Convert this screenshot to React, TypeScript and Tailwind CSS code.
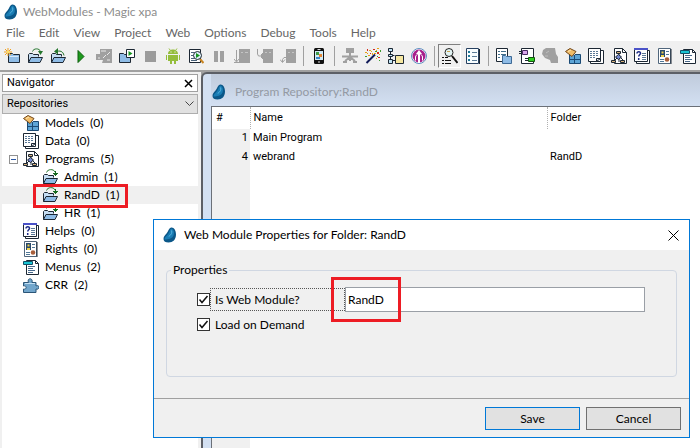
import type { ReactNode } from "react";

const INK = "#1c2733";

function Glyph({ children, size = 16 }: { children: ReactNode; size?: number }) {
  return (
    <svg width={size} height={size} viewBox="0 0 16 16" fill="none" aria-hidden="true" className="shrink-0">
      {children}
    </svg>
  );
}

function Drop() {
  return (
    <Glyph>
      <path d="M9 .5C12 0 14 3.500 14 7.500c0 5-3 8-7.500 8C3.500 15.500 1.500 14.500 1.500 12c0-2.500 1.500-3.700 3-5.500C6.500 4.200 6.500 1.500 9 .5z" fill="#0b5788" />
      <path d="M9.500 1.500C12 2.500 12.500 6 11.500 8.500 10.300 11.500 6.500 12.500 2.500 12.500 2.500 10.500 4 9.500 5.500 7.800 7.500 5.600 7.500 2.500 9.500 1.500z" fill="#1a7db4" />
      <path d="M9.500 3.500c1 2-.3 4.500-2.800 6" stroke="#56b4e0" />
    </Glyph>
  );
}

function FolderShape() {
  return (
    <>
      <path d="M1.500 14.500v-8l1-1h3l1 1h5v2" fill="#c6def4" stroke={INK} />
      <path d="M1.500 14.500l2.500-5h11.500l-2.500 5z" fill="#8fbce6" stroke={INK} />
    </>
  );
}

function NewFolder() {
  return (
    <Glyph>
      <path d="M4.500 14.500v-9h4l1 1h6v8z" fill="#8fbce6" stroke={INK} />
      <path d="M5.500 8.500h9" stroke="#d5e9fb" />
      <path d="M4 0v8M0 4h8M1 1l6 6M7 1L1 7" stroke="#f0a020" />
      <path d="M3 3h2v2H3z" fill="#ffe25c" />
    </Glyph>
  );
}

function OpenFolder() {
  return (
    <Glyph>
      <FolderShape />
      <path d="M5.500 3.500c1-3.500 7-3.500 8 0" stroke="#23752c" />
      <path d="M11 3h5l-2.500 4z" fill="#23752c" />
    </Glyph>
  );
}

function ReturnFolder() {
  return (
    <Glyph>
      <FolderShape />
      <path d="M6 3.500c4-1 7-.5 8 4" stroke="#23752c" />
      <path d="M8 0v6.500L4 3.500z" fill="#23752c" />
    </Glyph>
  );
}

function TreeFolder() {
  return (
    <Glyph>
      <FolderShape />
      <path d="M4.500 3.500c1-3.500 7-4 8.500-.5" stroke="#23752c" />
      <path d="M11 4.500h5M13.500 2v5" stroke="#176a20" />
      <path d="M12 4h3v2h-3z" fill="#176a20" />
    </Glyph>
  );
}

function Run() {
  return (
    <Glyph>
      <path d="M5 2.500v12l6-6z" fill="#1d9a1d" stroke="#0c5f0c" />
    </Glyph>
  );
}

function GreyTask() {
  return (
    <Glyph>
      <path d="M0 6h4V1h12v14H6l1-3H0z" fill="#a0a0a0" />
      <path d="M5 3h5M11 7l3-3M7 10l3-3M2 10h2M11 12h3" stroke="#e9e9e9" />
    </Glyph>
  );
}

function RunProject() {
  return (
    <Glyph>
      <path d="M.5 14.500v-9h4l1 1h6v8z" fill="#8fbce6" stroke={INK} />
      <path d="M7.500 1.500h8v8h-8z" fill="#fff" stroke={INK} />
      <path d="M9.500 3v5l4-2.500z" fill="#16941f" />
    </Glyph>
  );
}

function Stop() {
  return (
    <Glyph>
      <path d="M3 3h11v11H3z" fill="#9b9b9b" />
    </Glyph>
  );
}

function Android() {
  return (
    <Glyph>
      <path d="M3 6c0-6 10-6 10 0zM3 7h10v6H3zM1 7h1v5H1zM14 7h1v5h-1zM5 13h2v3H5zM9 13h2v3H9z" fill="#94bd3c" />
      <path d="M4 .5l1.500 2M12 .5l-1.500 2" stroke="#94bd3c" />
      <path d="M5.500 4h1M9.500 4h1" stroke="#fff" />
    </Glyph>
  );
}

function DebugRun() {
  return (
    <Glyph>
      <path d="M1.500 1.500h11v13h-11z" fill="#fff" stroke={INK} />
      <path d="M3 4.500h3M3 7.500h2M3 10.500h3M3 12.500h6" stroke="#49627a" />
      <path d="M12 11l3.500 4" stroke="#c98522" strokeWidth="2" />
      <circle cx="9.500" cy="7.500" r="4" fill="#e0f0f8" stroke={INK} />
      <path d="M8 5v5l4-2.500z" fill="#16941f" />
    </Glyph>
  );
}

function Pause() {
  return (
    <Glyph>
      <path d="M3 3h4v11H3zM9 3h4v11H9z" fill="#a0a0a0" />
    </Glyph>
  );
}

function StepInto() {
  return (
    <Glyph>
      <path d="M5 1h11v14H5z" fill="#a0a0a0" />
      <path d="M2.500 2v11M0 11l2.500 3L5 11M0 14.500h6" stroke="#a0a0a0" />
      <path d="M7 4.500h2M11 4.500h3" stroke="#c4c4c4" />
    </Glyph>
  );
}

function StepOver() {
  return (
    <Glyph>
      <path d="M6 1h10v14H6z" fill="#a0a0a0" />
      <path d="M.5 1v5l1 2h4M5 5l3 3-3 3" stroke="#a0a0a0" />
      <path d="M4 6h3v4H4z" fill="#a0a0a0" />
      <path d="M8 4.500h2M12 4.500h2" stroke="#c4c4c4" />
    </Glyph>
  );
}

function StepOut() {
  return (
    <Glyph>
      <path d="M6 1h10v14H6z" fill="#a0a0a0" />
      <path d="M8 9.500H4l-1.500 2V14M0 11.500l2.500 3 2.500-3" stroke="#a0a0a0" />
      <path d="M8 4.500h2M12 4.500h2" stroke="#c4c4c4" />
    </Glyph>
  );
}

function Phone() {
  return (
    <Glyph>
      <rect x="3" y="0" width="10" height="16" rx="1.500" fill="#111" />
      <path d="M4 3h8v9H4z" fill="#cfeaf6" />
      <path d="M5 4h3v3H5z" fill="#3f9b46" />
      <path d="M8 6h3v3H8z" fill="#e58634" />
      <path d="M5 9h4v2H5z" fill="#3a86c8" />
      <path d="M6.500 1.500h3M7 14h2" stroke="#ddd" />
    </Glyph>
  );
}

function GreyTree() {
  return (
    <Glyph>
      <path d="M4 0h8v5H4zM1 13h4v2H1zM11 13h4v2h-4z" fill="#a0a0a0" />
      <path d="M8 5v8M0 8.500h16M3 13l5-4 5 4" stroke="#a0a0a0" strokeWidth="2" />
    </Glyph>
  );
}

function Wand() {
  return (
    <Glyph>
      <path d="M1.500 15L10 6.500" stroke="#111b58" strokeWidth="2" />
      <path d="M0 4h2v1H0zM4 2h2v1H4zM7 5h1v2H7zM3 7h2v1H3zM12 0h2v1h-2z" fill="#e8a010" />
      <path d="M2 1h1v2H2zM8 1h2v1H8zM12 4h2v2h-2zM13 9h2v1h-2zM5 5h1v1H5z" fill="#d12b1f" />
      <path d="M10 3h2v1h-2zM15 2h1v2h-1zM12 8h1v1h-1zM0 8h2v1H0zM14 12h1v1h-1z" fill="#3b9b2c" />
      <path d="M6 3h1v1H6zM9 5h2v1H9zM11 2h1v1h-1zM11 10h1v1h-1zM14 6h1v1h-1zM2 5h1v1H2z" fill="#e8a010" />
    </Glyph>
  );
}

function Composite() {
  return (
    <Glyph>
      <path d="M2.500 4v8M2.500 7.500h4M2.500 12.500h5" stroke={INK} />
      <path d="M.5.5h4v3h-4zM.5 6.500h4v2h-4zM.5 11.500h4v4h-4z" fill="#bfe3f5" stroke={INK} />
      <path d="M7.500 7.500h8v8h-8z" fill="#f6e7a0" stroke={INK} />
    </Glyph>
  );
}

function Merge() {
  return (
    <Glyph>
      <circle cx="8" cy="8" r="7.500" fill="#fff" stroke="#5c8fc0" />
      <circle cx="8" cy="8" r="6.500" fill="#a8208c" />
      <path d="M8 2l3 4H9v9H7V6H5z" fill="#fff" />
      <path d="M4.500 12.500V9c0-2 2-2 2-3M11.500 12.500V9c0-2-2-2-2-3" stroke="#fff" />
    </Glyph>
  );
}

function Locate() {
  return (
    <Glyph>
      <path d="M0 9.500h2M3 9.500h3M0 12.500h2M3 12.500h6M0 15.500h2M3 15.500h6" stroke="#111" />
      <path d="M10 8l5.500 7" stroke="#111" strokeWidth="2" />
      <circle cx="7" cy="4.500" r="4" fill="#e3f4f4" stroke="#222" />
      <path d="M5 3.500h3" stroke="#c8a452" />
    </Glyph>
  );
}

function ListPage() {
  return (
    <Glyph>
      <path d="M1.500.5h12v15h-12z" fill="#f8fdff" stroke="#274060" />
      <path d="M14.500 1v15" stroke={INK} />
      <path d="M3 4h2M3 8h2M3 12h2" stroke="#1f7a9a" strokeWidth="2" />
      <path d="M7 4.500h5M7 8.500h5M7 12.500h5" stroke="#5c7d98" />
    </Glyph>
  );
}

function ListFolder() {
  return (
    <Glyph>
      <path d="M.5.500h11v13H.5z" fill="#fff" stroke={INK} />
      <path d="M2 3.500h2M5 3.500h5M2 6.500h2M5 6.500h5M2 9.500h2" stroke="#42708c" />
      <path d="M6.500 15.500v-8h3l1 1h5v7z" fill="#8fbce6" stroke="#3e6a96" />
    </Glyph>
  );
}

function Plugs() {
  return (
    <Glyph>
      <path d="M2.500.5h12v15h-12z" fill="#fff" stroke={INK} />
      <path d="M0 3.500h4M0 5.500h4M6 10.500h4M6 12.500h4" stroke={INK} />
      <path d="M3.500 2.500h5v4h-5z" fill="#d9a5ec" stroke="#4a2a63" />
      <path d="M9.500 9.500h6v4h-6z" fill="#2fd022" stroke="#14520f" />
    </Glyph>
  );
}

function GreyModels() {
  return (
    <Glyph>
      <path d="M1 2l3-2h9l1 6 2 3v6H9l-1-3-5-2-3-4z" fill="#a0a0a0" />
      <path d="M4 5l3-2M3 8h3" stroke="#bdbdbd" />
    </Glyph>
  );
}

function Models() {
  return (
    <Glyph>
      <path d="M4 6h5v9.500H4zM9.500 6.500h6v9h-6z" fill="#5ea5d6" />
      <path d="M4.500 7v8.500h11V6.500H10M9.500 7v8.500M4.500 11.500h11" stroke="#1b4a74" />
      <path d="M.5 3.500L5 .5l6 3-4 5z" fill="#f1bd68" stroke="#714618" />
      <path d="M3 3.500L6 2" stroke="#ffe6b0" />
    </Glyph>
  );
}

function DataPages() {
  return (
    <Glyph>
      <path d="M2.500 2.500h13v13h-13z" fill="#fff" stroke={INK} />
      <path d="M.5.5h12v13H.5z" fill="#fff" stroke={INK} />
      <path d="M2 3.500h9M2 5.500h9M2 7.500h9M2 9.500h6" stroke="#5a7896" strokeDasharray="2 1" />
      <path d="M8.500 13.500v-3h4z" fill="#e7eef5" stroke={INK} />
    </Glyph>
  );
}

function Programs() {
  return (
    <Glyph>
      <path d="M3.500.5h8l4 4v11h-12z" fill="#fff" stroke={INK} />
      <path d="M11.500.5v4h4" stroke={INK} />
      <path d="M8 4v10M3 13l5-5 5 5" stroke={INK} />
      <path d="M5.500 3.500h4v2h-4zM.5 12.500h4v2h-4zM9.500 12.500h4v2h-4z" fill="#d6b07a" stroke={INK} />
      <path d="M7.500 6.500l3 2.500-3 2.500-3-2.500z" fill="#7388d0" stroke={INK} />
    </Glyph>
  );
}

function Helps() {
  return (
    <Glyph>
      <path d="M2.500 2.500h13v13h-13z" fill="#fff" stroke={INK} />
      <path d="M.5.5h13v13H.5z" fill="#fff" stroke={INK} />
      <path d="M0 1h14" stroke="#4a52c8" strokeWidth="2" />
      <path d="M3 5.500c0-2.500 4-2 3.500 0-.3 1.200-1.800 1.500-1.800 3M4.700 10v2" stroke="#1d2c88" strokeWidth="1.500" />
      <path d="M8 5.500h4M8 7.500h4M8 9.500h4M8 11.500h4" stroke="#5a7896" />
    </Glyph>
  );
}

function Rights() {
  return (
    <Glyph>
      <path d="M1.500.5h12v15h-12z" fill="#fff" stroke="#50667c" />
      <path d="M14 1v15" stroke={INK} />
      <path d="M3 2h5v7H3z" fill="#2a4a6c" />
      <path d="M4.500 3.500h2v2h-2zM4 7h3v2H4z" fill="#efd24e" />
      <path d="M9 3.500h3M9 6.500h3M3 11.500h4M3 13.500h4" stroke="#4f7796" />
      <circle cx="10" cy="11.500" r="2.300" fill="#a95f3c" />
    </Glyph>
  );
}

function Menus() {
  return (
    <Glyph>
      <path d="M3.500 1.500h9l3 3v11h-12z" fill="#fff" stroke={INK} />
      <path d="M12.500 1.500v3h3" stroke={INK} />
      <path d="M.5 2.500h9v3h-9z" fill="#18c4d4" stroke="#124f66" />
      <path d="M5 7.500h7M5 9.500h5M5 11.500h7M5 13.500h5" stroke="#47688a" />
    </Glyph>
  );
}

function Puzzle() {
  return (
    <Glyph>
      <path d="M.5 5.500h5c-2-5 5-5 3.500 0h4v3.500c4-2 4 4.500 0 3v3.500H.5v-3.500c3.500 1 3.500-4 0-3z" fill="#72a6cc" stroke="#2b5577" />
      <path d="M2 6.500h10" stroke="#c2dff3" />
    </Glyph>
  );
}

const toolGroups = [
  [
    ["New project", NewFolder],
    ["Open project", OpenFolder],
    ["Close project", ReturnFolder],
    ["Run", Run],
    ["Run task", GreyTask],
    ["Run project", RunProject],
    ["Stop", Stop],
    ["Android", Android],
    ["Debug", DebugRun],
    ["Pause", Pause],
    ["Step into", StepInto],
    ["Step over", StepOver],
    ["Step out", StepOut],
  ],
  [["Mobile preview", Phone]],
  [
    ["Hierarchy", GreyTree],
    ["Wizard", Wand],
    ["Composite", Composite],
    ["Merge", Merge],
  ],
  [
    ["Locate", Locate],
    ["List", ListPage],
  ],
  [
    ["Folders", ListFolder],
    ["Components", Plugs],
    ["Checker", GreyModels],
    ["Models", Models],
    ["Data", DataPages],
    ["Programs", Programs],
    ["Helps", Helps],
    ["Rights", Rights],
    ["Menus", Menus],
  ],
] as [string, () => ReactNode][][];

const menus = ["File", "Edit", "View", "Project", "Web", "Options", "Debug", "Tools", "Help"];

const tree = [
  { label: "Models", count: 0, Icon: Models },
  { label: "Data", count: 0, Icon: DataPages },
  { label: "Programs", count: 5, Icon: Programs, open: true },
  { label: "Admin", count: 1, Icon: TreeFolder, child: true },
  { label: "RandD", count: 1, Icon: TreeFolder, child: true, selected: true },
  { label: "HR", count: 1, Icon: TreeFolder, child: true },
  { label: "Helps", count: 0, Icon: Helps },
  { label: "Rights", count: 0, Icon: Rights },
  { label: "Menus", count: 2, Icon: Menus },
  { label: "CRR", count: 2, Icon: Puzzle },
];

function rowClass(child?: boolean, selected?: boolean) {
  if (selected) return "relative flex h-[18px] items-center gap-1.5 bg-[#f0f0f0] pl-10";
  if (child) return "relative flex h-[18px] items-center gap-1.5 pl-10";
  return "relative flex h-[18px] items-center gap-1.5 pl-[21px]";
}

function Toolbar() {
  return (
    <div role="toolbar" className="flex h-[29px] items-center overflow-hidden bg-[#f0f0f0]">
      {toolGroups.map((group, i) => (
        <div key={i} className="flex shrink-0 items-center">
          {i > 0 && (
            <div className="flex w-2 justify-center">
              <div className="h-5 w-px bg-[#a0a0a0]" />
            </div>
          )}
          {group.map(([name, Icon]) => (
            <button
              key={name}
              aria-label={name}
              className={
                name === "Locate"
                  ? "flex h-6 w-[23px] items-center justify-center border border-t-[#808080] border-r-white border-b-white border-l-[#808080]"
                  : "flex h-6 w-[23px] items-center justify-center"
              }
            >
              <Icon />
            </button>
          ))}
        </div>
      ))}
    </div>
  );
}

function Navigator() {
  return (
    <aside className="flex w-[201px] shrink-0 flex-col bg-[#f0f0f0] pt-0.5 pr-[3px] pl-0.5">
      <div className="flex h-[18px] items-center justify-between border border-[#a0a0a0] bg-white px-1 font-[Roboto] text-[11px]">
        <span>Navigator</span>
        <button aria-label="Close navigator">
          <svg width="9" height="9" viewBox="0 0 9 9" stroke="#000" strokeWidth="1.500">
            <path d="M1 1l7 7M8 1L1 8" />
          </svg>
        </button>
      </div>
      <div className="relative mt-0.5">
        <select
          aria-label="View"
          className="block h-5 w-full appearance-none border border-[#adadad] bg-[#e1e1e1] px-1 font-[Roboto] text-[11px]"
        >
          <option>Repositories</option>
        </select>
        <svg width="9" height="6" viewBox="0 0 9 6" fill="none" stroke="#444" className="pointer-events-none absolute top-[7px] right-1">
          <path d="M.5.5l4 4 4-4" />
        </svg>
      </div>
      <ul className="flex-1 bg-white text-[12px]">
        {tree.map(({ label, count, Icon, open, child, selected }) => (
          <li key={label} className={rowClass(child, selected)}>
            {open && (
              <button aria-label="Collapse Programs" className="absolute left-[7px] flex size-[9px] items-center justify-center border border-[#919191] bg-white">
                <span className="h-px w-[5px] bg-[#2b57a5]" />
              </button>
            )}
            <Icon />
            <span className="whitespace-pre">
              {label}  ({count})
            </span>
            {selected && <span className="absolute -top-0.5 left-[31px] z-10 h-6 w-[95px] border-3 border-[#ed1c24]" />}
          </li>
        ))}
      </ul>
    </aside>
  );
}

function ProgramRepository() {
  return (
    <section className="flex flex-1 flex-col rounded-tl-md border-t-2 border-l-2 border-[#5c5f66] bg-[#d3e0f2] pl-2">
      <header className="flex h-8 items-center gap-2 bg-linear-to-b from-[#c0cbdc] to-[#d3e0f2] pt-1 text-[12px] text-[#949aa4]">
        <Drop />
        <h2>Program Repository:RandD</h2>
      </header>
      <div className="flex flex-1 flex-col border-t border-l border-[#6b7078] bg-white font-[Roboto] text-[11px]">
        <table className="w-full table-fixed">
          <thead>
            <tr className="h-[22px] text-left">
              <th className="w-[38px] border-r border-dotted border-[#b0b0b0] pl-1 font-normal">#</th>
              <th className="w-[297px] border-r border-dotted border-[#b0b0b0] pl-[3px] font-normal">Name</th>
              <th className="pl-[3px] font-normal">Folder</th>
            </tr>
          </thead>
          <tbody>
            <tr className="h-[19px]">
              <td className="bg-[#f0f0f0] pr-0.5 text-right">1</td>
              <td className="pl-[3px]">Main Program</td>
              <td />
            </tr>
            <tr className="h-[19px]">
              <td className="bg-[#f0f0f0] pr-0.5 text-right">4</td>
              <td className="pl-[3px]">webrand</td>
              <td className="pl-[3px]">RandD</td>
            </tr>
          </tbody>
        </table>
        <div className="w-[38px] flex-1 bg-[#f0f0f0]" />
      </div>
    </section>
  );
}

function CheckBox({ id }: { id: string }) {
  return (
    <span className="relative size-[13px]">
      <input id={id} type="checkbox" defaultChecked className="peer block size-[13px] appearance-none border border-[#333] bg-white" />
      <svg width="13" height="13" viewBox="0 0 13 13" fill="none" stroke="#111" strokeWidth="1.500" className="pointer-events-none absolute inset-0 hidden peer-checked:block">
        <path d="M2.500 6.500l2.500 3L10.500 3" />
      </svg>
    </span>
  );
}

function PropertiesDialog() {
  return (
    <form role="dialog" aria-labelledby="dialog-title" className="absolute top-[219px] right-2.5 left-[153px] border border-[#0078d7] bg-[#f0f0f0] text-[12px]">
      <header className="flex h-[30px] items-center justify-between bg-white pr-2.5 pl-2">
        <div className="flex items-center gap-1.5">
          <Drop />
          <h2 id="dialog-title">Web Module Properties for Folder: RandD</h2>
        </div>
        <button type="button" aria-label="Close">
          <svg width="11" height="11" viewBox="0 0 11 11" stroke="#000">
            <path d="M.5.5l10 10M10.500.5l-10 10" />
          </svg>
        </button>
      </header>
      <div className="px-3 pt-3 pb-[21px]">
        <fieldset className="h-[115px] rounded-sm border border-[#d0d7e2] px-[30px]">
          <legend className="-ml-[26px] px-0.5 leading-4">Properties</legend>
          <div className="relative mt-[9px] flex h-[25px] items-center">
            <CheckBox id="is-web" />
            <label htmlFor="is-web" className="flex h-[23px] w-[135px] items-center border border-dotted border-[#555] pl-1">
              Is Web Module?
            </label>
            <input aria-label="Module name" defaultValue="RandD" className="h-[25px] w-[300px] border border-[#9a9fa6] bg-white px-0.5" />
            <span className="pointer-events-none absolute -top-2.5 left-[134px] h-[45px] w-[70px] border-3 border-[#ed1c24]" />
          </div>
          <div className="flex h-[25px] items-center">
            <CheckBox id="on-demand" />
            <label htmlFor="on-demand" className="pl-[5px]">Load on Demand</label>
          </div>
        </fieldset>
      </div>
      <footer className="flex justify-end gap-1.5 border-t border-[#a0a0a0] px-2 pt-2 pb-[7px]">
        <button type="button" className="h-[23px] w-[95px] border border-[#0078d7] bg-[#e1e1e1]">Save</button>
        <button type="button" className="h-[23px] w-[95px] border border-[#707070] bg-[#e1e1e1]">Cancel</button>
      </footer>
    </form>
  );
}

export default function App() {
  return (
    <div className="relative flex min-h-screen flex-col overflow-hidden bg-white font-[Lato,sans-serif] text-black">
      <header className="flex h-6 items-center gap-1 px-[3px] text-[12px] text-[#8c8c8c]">
        <Drop />
        <h1>WebModules - Magic xpa</h1>
      </header>
      <nav className="flex h-[17px] items-center gap-3.5 px-1.5 text-[12px] text-[#666]">
        {menus.map((menu) => (
          <button key={menu}>{menu}</button>
        ))}
      </nav>
      <Toolbar />
      <main className="flex flex-1 border-t-2 border-[#a0a0a0] bg-[#a0a0a0]">
        <Navigator />
        <ProgramRepository />
      </main>
      <PropertiesDialog />
    </div>
  );
}
